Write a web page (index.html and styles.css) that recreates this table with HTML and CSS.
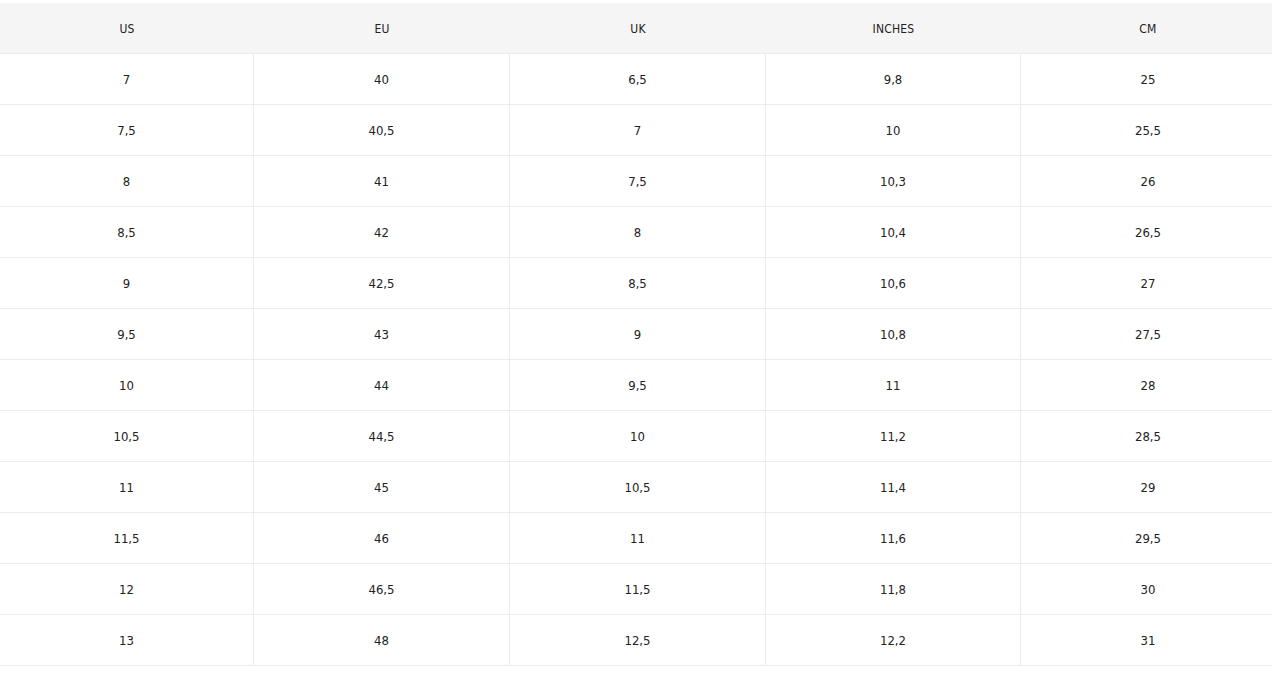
FILE: index.html
```html
<!DOCTYPE html>
<html>
<head>
<meta charset="utf-8">
<link rel="stylesheet" href="styles.css">
</head>
<body>
<table class="size-table">
  <colgroup>
    <col class="c1"><col class="c2"><col class="c3"><col class="c4"><col class="c5">
  </colgroup>
  <thead>
    <tr><th>US</th><th>EU</th><th>UK</th><th>INCHES</th><th>CM</th></tr>
  </thead>
  <tbody>
    <tr><td>7</td><td>40</td><td>6,5</td><td>9,8</td><td>25</td></tr>
    <tr><td>7,5</td><td>40,5</td><td>7</td><td>10</td><td>25,5</td></tr>
    <tr><td>8</td><td>41</td><td>7,5</td><td>10,3</td><td>26</td></tr>
    <tr><td>8,5</td><td>42</td><td>8</td><td>10,4</td><td>26,5</td></tr>
    <tr><td>9</td><td>42,5</td><td>8,5</td><td>10,6</td><td>27</td></tr>
    <tr><td>9,5</td><td>43</td><td>9</td><td>10,8</td><td>27,5</td></tr>
    <tr><td>10</td><td>44</td><td>9,5</td><td>11</td><td>28</td></tr>
    <tr><td>10,5</td><td>44,5</td><td>10</td><td>11,2</td><td>28,5</td></tr>
    <tr><td>11</td><td>45</td><td>10,5</td><td>11,4</td><td>29</td></tr>
    <tr><td>11,5</td><td>46</td><td>11</td><td>11,6</td><td>29,5</td></tr>
    <tr><td>12</td><td>46,5</td><td>11,5</td><td>11,8</td><td>30</td></tr>
    <tr><td>13</td><td>48</td><td>12,5</td><td>12,2</td><td>31</td></tr>
  </tbody>
</table>
</body>
</html>
```
FILE: styles.css
```css
html, body {
  margin: 0;
  padding: 0;
  background: #ffffff;
}
body {
  padding-top: 3px;
  font-family: "DejaVu Sans Condensed", "DejaVu Sans", sans-serif;
  color: #222222;
}
.size-table {
  width: 100%;
  table-layout: fixed;
  border-collapse: separate;
  border-spacing: 0;
}
.c1 { width: 254px; }
.c2 { width: 256px; }
.c3 { width: 256px; }
.c4 { width: 255px; }
.size-table th,
.size-table td {
  box-sizing: border-box;
  text-align: center;
  padding: 0;
  font-weight: normal;
}
.size-table th {
  height: 51px;
  padding-top: 2px;
  font-size: 12px;
  letter-spacing: 0.2px;
  background: #f5f5f5;
  border-bottom: 1px solid #ebebeb;
}
.size-table td {
  height: 51px;
  font-size: 13px;
  border-bottom: 1px solid #ebebeb;
  border-right: 1px solid #ebebeb;
}
.size-table th:last-child,
.size-table td:last-child {
  border-right: none;
  padding-left: 3px;
}
```
